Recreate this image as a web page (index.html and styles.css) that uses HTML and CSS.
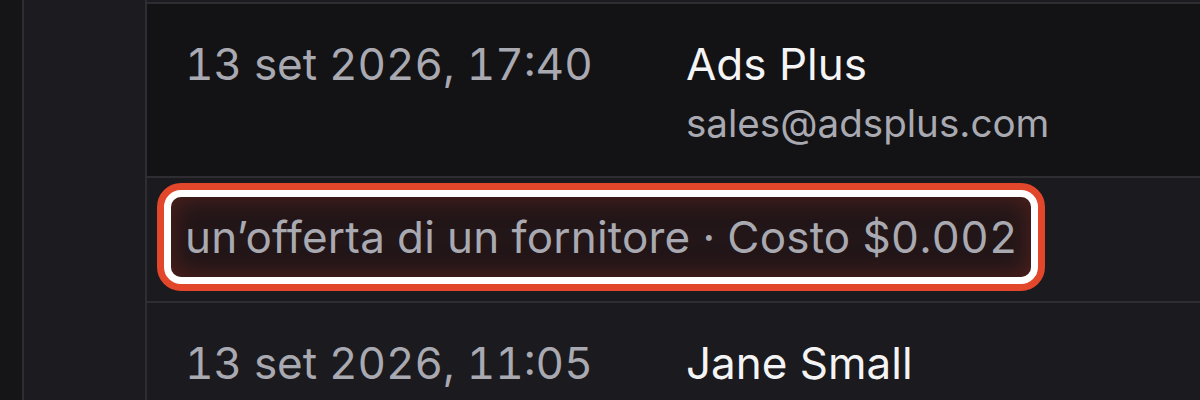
FILE: index.html
```html
<!DOCTYPE html>
<html lang="it">
<head>
<meta charset="utf-8">
<link rel="stylesheet" href="styles.css">
</head>
<body>
<div class="app">
  <div class="rail"></div>
  <div class="side"></div>
  <div class="main">
    <div class="row row-first">
      <div class="date">13 set 2026, 17:40</div>
      <div class="sender">
        <div class="name">Ads Plus</div>
        <div class="email">sales@adsplus.com</div>
      </div>
    </div>
    <div class="row row-note">
      <div class="ring">
        <div class="note">un’offerta di un fornitore · Costo $0.002</div>
      </div>
    </div>
    <div class="row row-next">
      <div class="date">13 set 2026, 11:05</div>
      <div class="sender">
        <div class="name">Jane Small</div>
      </div>
    </div>
  </div>
</div>
</body>
</html>
```
FILE: styles.css
```css
html, body {
  margin: 0;
  padding: 0;
  background: #151417;
  width: 1200px;
  height: 400px;
  overflow: hidden;
  font-family: Inter, "Noto Sans", sans-serif;
}
.app {
  display: flex;
  height: 400px;
}
.rail {
  width: 22px;
  background: #151417;
  border-right: 2px solid #2e2d32;
}
.side {
  width: 121px;
  background: #1c1b1f;
  border-right: 2px solid #2e2d32;
}
.main {
  flex: 1;
  padding-top: 2px;
  background: #1c1b1f;
  display: flex;
  flex-direction: column;
}
.row {
  border-top: 2px solid #2e2d32;
  display: flex;
  padding-left: 38px;
}
.row-first {
  height: 172px;
  background: #131215;
}
.row-note {
  height: 123px;
  background: #1b1a1e;
  padding-left: 10px;
  align-items: flex-start;
}
.row-next {
  flex: 1;
  background: #1b1a1e;
}
.date {
  width: 501px;
  font-size: 44px;
  color: #a9a9b1;
  line-height: 52px;
  padding-top: 34px;
  font-variant-numeric: tabular-nums;
}
.sender {
  padding-top: 34px;
}
.name {
  font-size: 44px;
  line-height: 52px;
  color: #f4f4f5;
}
.email {
  font-size: 38.6px;
  line-height: 46px;
  color: #a9a9b1;
  margin-top: 10px;
}
.ring {
  margin-top: 5px;
  border: 7px solid #e2462b;
  border-radius: 24px;
  padding: 7px;
  background: #ffffff;
}
.note {
  background: #221618;
  box-shadow: inset 0 0 26px rgba(120, 42, 34, 0.6);
  border-radius: 10px;
  font-size: 44px;
  line-height: 52px;
  letter-spacing: 0.2px;
  color: #a9a9b1;
  padding: 14px 13px 14px 14px;
  white-space: nowrap;
  font-variant-numeric: tabular-nums;
}
```
